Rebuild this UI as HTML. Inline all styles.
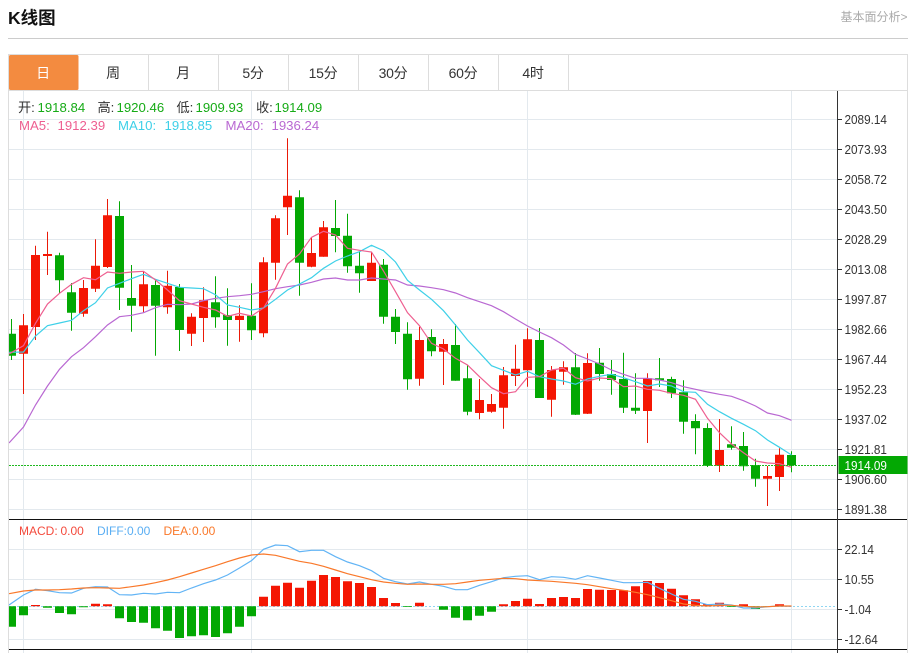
<!DOCTYPE html>
<html lang="zh"><head><meta charset="utf-8"><title>K线图</title>
<style>
html,body{margin:0;padding:0;background:#fff;width:920px;height:653px;overflow:hidden}
svg{display:block}
text{font-family:"Liberation Sans","Noto Sans CJK SC",sans-serif}
</style></head><body>
<svg width="920" height="653" viewBox="0 0 920 653" xmlns="http://www.w3.org/2000/svg">
<defs><clipPath id="c"><rect x="9" y="91" width="828" height="562"/></clipPath></defs>
<text x="8" y="24" font-size="17.5" font-weight="700" fill="#111">K线图</text>
<text x="840.5" y="21" font-size="12" fill="#aaa">基本面分析&gt;</text>
<path d="M8 38.5H908" stroke="#ccc"/>
<!-- tabs -->
<path d="M8.5 653V54.5H907.5V653" fill="none" stroke="#ddd"/>
<path d="M8.5 90.5H907.5M148.5 55V90M218.5 55V90M288.5 55V90M358.5 55V90M428.5 55V90M498.5 55V90M568.5 55V90" fill="none" stroke="#ddd"/>
<rect x="9" y="55" width="69.5" height="35" rx="1.5" fill="#f38b40"/>
<g font-size="14" text-anchor="middle" fill="#333" letter-spacing="-.3">
<text x="43" y="78" fill="#fff">日</text>
<text x="113" y="78">周</text><text x="183" y="78">月</text>
<text x="253" y="78">5分</text><text x="323" y="78">15分</text><text x="393" y="78">30分</text><text x="463" y="78">60分</text><text x="533" y="78">4时</text>
</g>
<!-- grid -->
<path d="M9 119.5H837M9 149.5H837M9 179.5H837M9 209.5H837M9 239.5H837M9 269.5H837M9 299.5H837M9 329.5H837M9 359.5H837M9 389.5H837M9 419.5H837M9 449.5H837M9 479.5H837M9 509.5H837M9 549.5H837M9 579.5H837M9 609.5H837M9 639.5H837M23.5 91V653M251.5 91V653M527.5 91V653M791.5 91V653" stroke="#e3e9ee" fill="none"/>
<g clip-path="url(#c)">
<!-- candles -->
<path fill="none" stroke="#03a803" d="M11.5 319V360M59.5 252.7V293M71.5 283V330.7M119.5 201.3V310M131.5 265V331.7M155.5 279.3V355.7M179.5 284V351M215.5 276.3V327.7M227.5 288.3V345.7M251.5 283.3V340M299.5 190.3V295.7M335.5 200V252.3M347.5 213.7V272.7M359.5 251.7V292.7M383.5 259V323.7M395.5 309V344M407.5 322.3V389.7M431.5 329.3V356.3M455.5 324V380.7M467.5 365V415.3M539.5 328V398M575.5 353V415M599.5 348V380.7M611.5 360V394.7M623.5 352.7V413M635.5 373.3V414M659.5 358V387M671.5 376.7V398M683.5 380.3V433.7M695.5 414.3V454.3M707.5 423.3V467M731.5 426.3V449.7M743.5 432V470.7M755.5 458.7V486.7M791.5 451.3V472.3"/>
<path fill="#03a803" d="M7 333.7h9V355.7h-9zM55 255.3h9V280.3h-9zM67 292.3h9V312.7h-9zM115 216h9V287.7h-9zM127 298h9V305.7h-9zM151 285h9V305.7h-9zM175 287h9V330h-9zM211 302.3h9V317.3h-9zM223 315h9V320h-9zM247 315.7h9V330.3h-9zM295 197.3h9V262.7h-9zM331 228h9V236h-9zM343 235.7h9V266.3h-9zM355 265.7h9V273.3h-9zM379 264.7h9V316.7h-9zM391 316.7h9V332h-9zM403 333.7h9V379.3h-9zM427 337h9V351.3h-9zM451 345h9V380.7h-9zM463 378.3h9V411.7h-9zM535 340h9V398h-9zM571 367.3h9V414.7h-9zM595 362.7h9V374h-9zM607 374h9V380h-9zM619 379h9V407.7h-9zM631 407.7h9V410.7h-9zM655 378.3h9V380.3h-9zM667 379h9V393.3h-9zM679 392.3h9V421.7h-9zM691 421h9V428.3h-9zM703 428h9V465.7h-9zM727 444.3h9V447.7h-9zM739 446h9V466.3h-9zM751 465h9V478.7h-9zM787 455h9V465.3h-9z"/>
<path fill="none" stroke="#ea1a08" d="M23.5 314V394M35.5 245.7V340M47.5 231.7V275M83.5 280V316.7M95.5 239.3V292M107.5 199V268M143.5 271.7V312.3M167.5 270.7V313.7M191.5 313.3V346M203.5 287.3V342M239.5 305.3V341.7M263.5 257.3V337.3M275.5 215.3V279.7M287.5 138.3V235M311.5 237.3V267.3M323.5 221V256.7M371.5 251.7V281M419.5 326.7V385.7M443.5 339V385M479.5 379V419.3M491.5 394V412.7M503.5 367V428.7M515.5 344.7V386M527.5 328.3V386.7M551.5 366V416.7M563.5 361.3V384.7M587.5 353.3V414M647.5 373.3V443M719.5 419V472M767.5 466V506M779.5 448.3V491"/>
<path fill="#f41603" d="M19 325.3h9V353.7h-9zM31 255h9V327h-9zM43 254h9V256h-9zM79 288h9V313.7h-9zM91 265.7h9V288.7h-9zM103 215.3h9V267h-9zM139 284.3h9V306.3h-9zM163 285.7h9V307.3h-9zM187 316.7h9V333.7h-9zM199 300.3h9V318h-9zM235 315.7h9V320h-9zM259 262.3h9V333.3h-9zM271 218.3h9V262.7h-9zM283 195.7h9V207.3h-9zM307 253h9V266.7h-9zM319 227.3h9V256.7h-9zM367 262.7h9V281h-9zM415 340h9V378.7h-9zM439 344h9V351.7h-9zM475 400h9V413h-9zM487 404h9V411.7h-9zM499 375.3h9V407.7h-9zM511 368.7h9V376h-9zM523 339.3h9V370.3h-9zM547 370h9V399.7h-9zM559 367.3h9V371.7h-9zM583 363h9V413.7h-9zM643 378.3h9V411h-9zM715 450h9V465.7h-9zM763 476h9V478.7h-9zM775 454.7h9V477h-9z"/>
<!-- MA lines -->
<polyline fill="none" stroke="#b968d2" stroke-width="1.2" points="9,443 23.5,427 35.5,405 47.5,386 59.5,369.3 71.5,356.7 83.5,347.7 95.5,336.7 107.5,325 119.5,316.7 131.5,315.3 143.5,312.7 155.5,307.7 167.5,304.3 179.5,304.7 191.5,304 203.5,300.7 215.5,298.3 227.5,296.7 239.5,295.7 251.5,294.3 263.5,291.7 275.5,288.7 287.5,286.7 299.5,285 311.5,282.3 323.5,279 335.5,278 347.5,280 359.5,280 371.5,278 383.5,279 395.5,280 407.5,285 419.5,286 431.5,287.7 443.5,289.7 455.5,293 467.5,297.7 479.5,301.7 491.5,305.7 503.5,311.7 515.5,319 527.5,326 539.5,332 551.5,337.7 563.5,345 575.5,354.3 587.5,359 599.5,364 611.5,370 623.5,374.3 635.5,378.3 647.5,378.3 659.5,380 671.5,382.7 683.5,386.7 695.5,389.3 707.5,392 719.5,394.3 731.5,396.3 743.5,400.7 755.5,406 767.5,413 779.5,415.7 791.5,420.3"/>
<polyline fill="none" stroke="#3ed0e8" stroke-width="1.2" points="9,352.3 23.5,352 35.5,336 47.5,325.7 59.5,323 71.5,320.3 83.5,310.7 95.5,302.7 107.5,288 119.5,283.3 131.5,278.7 143.5,274.3 155.5,279.3 167.5,283.3 179.5,287.3 191.5,288 203.5,288.7 215.5,294.7 227.5,305 239.5,307.3 251.5,310 263.5,308 275.5,299.3 287.5,290 299.5,284 311.5,277.7 323.5,268.3 335.5,261 347.5,256 359.5,251.7 371.5,245.3 383.5,250.7 395.5,262 407.5,280.3 419.5,290 431.5,299.3 443.5,310.7 455.5,325 467.5,340 479.5,352.7 491.5,365.7 503.5,370.3 515.5,375 527.5,371.3 539.5,376.7 551.5,379 563.5,381 575.5,384.3 587.5,379 599.5,376.3 611.5,374.3 623.5,377.7 635.5,381.7 647.5,386 659.5,384 671.5,386 683.5,391.7 695.5,392.3 707.5,404.3 719.5,411.7 731.5,418.3 743.5,424.3 755.5,430.7 767.5,440 779.5,447.3 791.5,455"/>
<polyline fill="none" stroke="#ee5f90" stroke-width="1.2" points="9,354 23.5,345.7 35.5,323.3 47.5,304 59.5,293.3 71.5,284.3 83.5,277.7 95.5,279.7 107.5,272 119.5,273.3 131.5,272 143.5,271.3 155.5,280 167.5,290 179.5,300.7 191.5,304 203.5,307.3 215.5,310 227.5,316.3 239.5,313.3 251.5,316 263.5,308 275.5,288.3 287.5,264 299.5,254 311.5,237.3 323.5,231.3 335.5,235 347.5,248.3 359.5,250.3 371.5,252 383.5,271 395.5,291.7 407.5,312.7 419.5,325.7 431.5,343.3 443.5,349 455.5,358.3 467.5,365 479.5,376.7 491.5,387.7 503.5,393.7 515.5,391.7 527.5,377.3 539.5,376.7 551.5,370 563.5,368.3 575.5,377.7 587.5,381 599.5,378 611.5,378.7 623.5,386.7 635.5,386 647.5,389.3 659.5,390.3 671.5,393.3 683.5,395.3 695.5,399.3 707.5,418.3 719.5,432.7 731.5,444 743.5,452.7 755.5,461 767.5,463 779.5,463.7 791.5,467.3"/>
<!-- MACD -->
<path fill="none" stroke="#8fd6f2" stroke-dasharray="2 2" d="M9 606.5H837"/>
<path fill="#03a803" d="M7 606.3h9V626.7h-9zM19 606.3h9V615.3h-9zM43 606.3h9V607.7h-9zM55 606.3h9V613h-9zM67 606.3h9V614.3h-9zM79 606.3h9V607.3h-9zM115 606.3h9V618.3h-9zM127 606.3h9V622h-9zM139 606.3h9V622.7h-9zM151 606.3h9V628.3h-9zM163 606.3h9V630.7h-9zM175 606.3h9V638h-9zM187 606.3h9V636.3h-9zM199 606.3h9V635.3h-9zM211 606.3h9V637h-9zM223 606.3h9V633.3h-9zM235 606.3h9V626.7h-9zM247 606.3h9V616.3h-9zM403 606.3h9V607h-9zM439 606.3h9V609.7h-9zM451 606.3h9V617.7h-9zM463 606.3h9V620.3h-9zM475 606.3h9V615.7h-9zM487 606.3h9V611.7h-9zM727 606.3h9V607h-9zM751 606.3h9V609h-9zM763 606.3h9V607h-9z"/>
<path fill="#f41603" d="M31 605h9V606.3h-9zM91 603.7h9V606.3h-9zM103 604.3h9V606.3h-9zM259 596.7h9V606.3h-9zM271 585.7h9V606.3h-9zM283 582.7h9V606.3h-9zM295 587.7h9V606.3h-9zM307 580.7h9V606.3h-9zM319 575h9V606.3h-9zM331 577h9V606.3h-9zM343 581.3h9V606.3h-9zM355 583h9V606.3h-9zM367 587h9V606.3h-9zM379 598h9V606.3h-9zM391 603h9V606.3h-9zM415 602.7h9V606.3h-9zM499 604.3h9V606.3h-9zM511 601h9V606.3h-9zM523 598.7h9V606.3h-9zM535 604h9V606.3h-9zM547 598h9V606.3h-9zM559 597h9V606.3h-9zM571 598h9V606.3h-9zM583 589h9V606.3h-9zM595 589.7h9V606.3h-9zM607 590h9V606.3h-9zM619 590.3h9V606.3h-9zM631 586.3h9V606.3h-9zM643 581h9V606.3h-9zM655 583h9V606.3h-9zM667 588.7h9V606.3h-9zM679 595.3h9V606.3h-9zM691 599.3h9V606.3h-9zM703 604.3h9V606.3h-9zM715 602.7h9V606.3h-9zM739 604.3h9V606.3h-9zM775 604.3h9V606.3h-9z"/>
<polyline fill="none" stroke="#62b4f5" stroke-width="1.2" points="9,605 23.5,595 35.5,589.3 47.5,590.7 59.5,592.7 71.5,593 83.5,588.3 95.5,586.7 107.5,587 119.5,594.7 131.5,595 143.5,593.3 155.5,594 167.5,592.3 179.5,592.7 191.5,588 203.5,583.7 215.5,580 227.5,575 239.5,568 251.5,560.7 263.5,549.3 275.5,545 287.5,545.7 299.5,551.7 311.5,550.3 323.5,550.3 335.5,556.7 347.5,562 359.5,565.7 371.5,570.7 383.5,578.3 395.5,581.7 407.5,584 419.5,582 431.5,584.3 443.5,586.3 455.5,589.7 467.5,589.7 479.5,585.3 491.5,581.7 503.5,577.7 515.5,576.3 527.5,575.7 539.5,579.7 551.5,576.7 563.5,577.3 575.5,579.3 587.5,575.7 599.5,578 611.5,580.3 623.5,582.7 635.5,582.7 647.5,582.3 659.5,588.3 671.5,594 683.5,599.3 695.5,601.3 707.5,604.7 719.5,604 731.5,605 743.5,608 755.5,608 767.5,606.7 779.5,606 791.5,606.3"/>
<polyline fill="none" stroke="#f9782a" stroke-width="1.2" points="9,593.7 23.5,591 35.5,590 47.5,590 59.5,589.7 71.5,589 83.5,588 95.5,587.7 107.5,588 119.5,588.3 131.5,586.7 143.5,585 155.5,582.7 167.5,580 179.5,576.7 191.5,573 203.5,569.3 215.5,565.7 227.5,561.7 239.5,558 251.5,555 263.5,554 275.5,555.3 287.5,558.3 299.5,561.3 311.5,563.3 323.5,566.3 335.5,570 347.5,573.7 359.5,576.7 371.5,579.7 383.5,582 395.5,583.3 407.5,584.3 419.5,584 431.5,584.3 443.5,584.3 455.5,583.7 467.5,582 479.5,580.3 491.5,579.3 503.5,578.3 515.5,578.7 527.5,580 539.5,580.7 551.5,581.3 563.5,582.3 575.5,583.3 587.5,584.7 599.5,586.7 611.5,588.7 623.5,590.3 635.5,592.3 647.5,594.7 659.5,597.7 671.5,600.7 683.5,604 695.5,605.3 707.5,606 719.5,605.3 731.5,605.3 743.5,606.3 755.5,607 767.5,606.7 779.5,606 791.5,606"/>
<path stroke="#20b820" stroke-dasharray="2 1" d="M9 465.5H837" fill="none"/>
</g>
<!-- axes -->
<path d="M9 519.5H907M9 649.5H907" stroke="#111"/>
<path d="M837.5 91V653" stroke="#333"/>
<path d="M838 119.5h4M838 149.5h4M838 179.5h4M838 209.5h4M838 239.5h4M838 269.5h4M838 299.5h4M838 329.5h4M838 359.5h4M838 389.5h4M838 419.5h4M838 449.5h4M838 479.5h4M838 509.5h4M838 549.5h4M838 579.5h4M838 609.5h4M838 639.5h4" stroke="#333"/>
<g font-size="13.2" fill="#333" transform="translate(844.5 0) scale(.89 1)">
<text x="0" y="124">2089.14</text><text x="0" y="154">2073.93</text><text x="0" y="184">2058.72</text><text x="0" y="214">2043.50</text><text x="0" y="244">2028.29</text><text x="0" y="274">2013.08</text><text x="0" y="304">1997.87</text><text x="0" y="334">1982.66</text><text x="0" y="364">1967.44</text><text x="0" y="394">1952.23</text><text x="0" y="424">1937.02</text><text x="0" y="454">1921.81</text><text x="0" y="484">1906.60</text><text x="0" y="514">1891.38</text>
<text x="0" y="554">22.14</text><text x="0" y="584">10.55</text><text x="0" y="614">-1.04</text><text x="0" y="644">-12.64</text>
</g>
<rect x="838.5" y="456" width="69" height="18" fill="#03a803"/>
<text x="0" y="470" font-size="13.2" fill="#fff" transform="translate(844.5 0) scale(.89 1)">1914.09</text>
<!-- legends -->
<g font-size="13.2">
<text x="18" y="112" fill="#333">开:</text><text x="37.5" y="112" fill="#16ab16">1918.84</text>
<text x="97.5" y="112" fill="#333">高:</text><text x="116.5" y="112" fill="#16ab16">1920.46</text>
<text x="176.5" y="112" fill="#333">低:</text><text x="195.5" y="112" fill="#16ab16">1909.93</text>
<text x="256" y="112" fill="#333">收:</text><text x="274.5" y="112" fill="#16ab16">1914.09</text>
<text x="19" y="130" fill="#ee5f90">MA5:</text><text x="57.5" y="130" fill="#ee5f90">1912.39</text>
<text x="118" y="130" fill="#3ed0e8">MA10:</text><text x="164.5" y="130" fill="#3ed0e8">1918.85</text>
<text x="225.5" y="130" fill="#b968d2">MA20:</text><text x="271.5" y="130" fill="#b968d2">1936.24</text>
</g>
<g font-size="12">
<text x="19" y="535" fill="#f44a3c">MACD:</text><text x="60.5" y="535" fill="#f44a3c">0.00</text>
<text x="97" y="535" fill="#5aaef3">DIFF:</text><text x="127" y="535" fill="#5aaef3">0.00</text>
<text x="163.5" y="535" fill="#f9782a">DEA:</text><text x="192" y="535" fill="#f9782a">0.00</text>
</g>
</svg>
</body></html>
